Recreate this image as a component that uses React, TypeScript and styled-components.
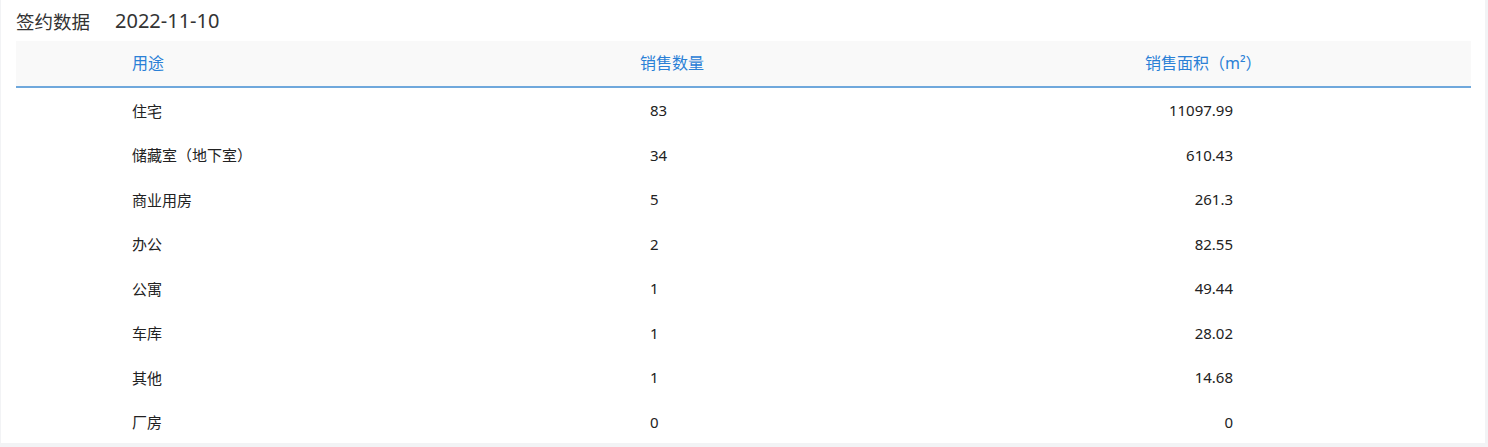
import React from 'react';
import styled, { createGlobalStyle } from 'styled-components';

const Global = createGlobalStyle`
  html, body {
    margin: 0;
    padding: 0;
    background: #f2f3f5;
  }
  body {
    font-family: "Noto Sans", "Noto Sans CJK SC", sans-serif;
  }
`;

const rows = [
  { use: '住宅', count: 83, area: '11097.99' },
  { use: '储藏室（地下室）', count: 34, area: '610.43' },
  { use: '商业用房', count: 5, area: '261.3' },
  { use: '办公', count: 2, area: '82.55' },
  { use: '公寓', count: 1, area: '49.44' },
  { use: '车库', count: 1, area: '28.02' },
  { use: '其他', count: 1, area: '14.68' },
  { use: '厂房', count: 0, area: '0' },
];

const Panel = styled.section`
  margin-left: 1px;
  width: 1484px;
  height: 443px;
  background: #fff;
  padding: 0 15px;
  box-sizing: border-box;
  overflow: hidden;
`;

const Title = styled.div`
  display: flex;
  align-items: center;
  height: 41px;
  font-size: 18.5px;
  color: #333;
  gap: 25px;

  span + span {
    font-size: 20px;
  }
`;

const Table = styled.div`
  width: 1455px;
  font-size: 15px;
`;

const Row = styled.div<{ $head?: boolean }>`
  display: grid;
  grid-template-columns: 116px 508px 505px 1fr;
  align-items: center;
  box-sizing: border-box;
  height: ${p => (p.$head ? '47px' : '44.5px')};
  padding-bottom: ${p => (p.$head ? '4px' : '0')};
  font-size: ${p => (p.$head ? '16px' : '15px')};
  background: ${p => (p.$head ? '#f9f9f9' : '#fff')};
  border-bottom: ${p => (p.$head ? '2px solid #6fa8dc' : 'none')};
  color: ${p => (p.$head ? '#2a80d6' : '#222')};
`;

const Cell = styled.div<{ $pad?: number; $right?: boolean }>`
  padding-left: ${p => p.$pad || 0}px;
  width: ${p => (p.$right ? '88px' : 'auto')};
  text-align: ${p => (p.$right ? 'right' : 'left')};
  white-space: nowrap;
`;

export default function App() {
  return (
    <>
      <Global />
      <Panel>
        <Title>
          <span>签约数据</span>
          <span>2022-11-10</span>
        </Title>
        <Table>
          <Row $head>
            <span />
            <Cell>用途</Cell>
            <Cell>销售数量</Cell>
            <Cell>销售面积（m²）</Cell>
          </Row>
          {rows.map(r => (
            <Row key={r.use}>
              <span />
              <Cell>{r.use}</Cell>
              <Cell $pad={10}>{r.count}</Cell>
              <Cell $right>{r.area}</Cell>
            </Row>
          ))}
        </Table>
      </Panel>
    </>
  );
}
